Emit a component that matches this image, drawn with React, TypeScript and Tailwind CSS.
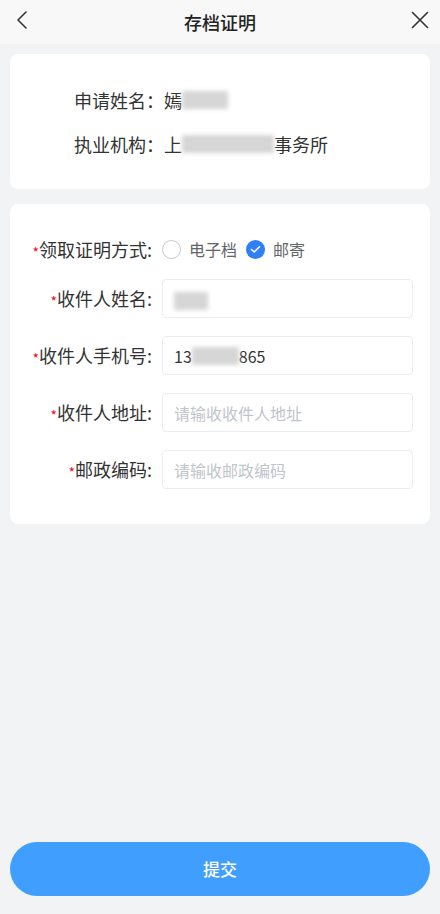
import React from "react";

const font = { fontFamily: '"Noto Sans CJK SC", "Noto Sans", sans-serif' };

function Blur({ w }: { w: number }) {
  return (
    <span
      className="inline-block h-[18px] bg-[#d6d6d6] blur-[2px] align-middle"
      style={{ width: w }}
    />
  );
}

function Label({ text }: { text: string }) {
  return (
    <div className="w-[142px] shrink-0 whitespace-nowrap text-right text-[18px] text-[#333]">
      <span className="relative top-[1px] text-[14px] text-[#ee0a24]">*</span>
      {text}
    </div>
  );
}

function Field({ label, placeholder, value }: { label: string; placeholder?: string; value?: React.ReactNode }) {
  return (
    <div className="flex items-center gap-[10px]">
      <Label text={label} />
      <div className="flex h-[39px] flex-1 items-center rounded-[4px] border border-[#ebedf0] px-[11px] text-[16px]">
        {value ? <span className="text-[#333]">{value}</span> : <span className="text-[#c0c4cc]">{placeholder}</span>}
      </div>
    </div>
  );
}

export default function App() {
  return (
    <div className="flex min-h-[914px] flex-col bg-[#f2f3f5]" style={font}>
      <div className="relative flex h-[44px] items-center justify-center bg-[#f8f8f8]">
        <svg className="absolute left-[14px] top-[10px]" width="16" height="20" viewBox="0 0 16 20" fill="none">
          <path d="M12 2 L4 10 L12 18" stroke="#333" strokeWidth="1.6" strokeLinecap="round" strokeLinejoin="round" />
        </svg>
        <span className="text-[18px] font-medium text-[#222]">存档证明</span>
        <svg className="absolute right-[11px] top-[11px]" width="18" height="18" viewBox="0 0 18 18" fill="none">
          <path d="M1.5 1.5 L16.5 16.5 M16.5 1.5 L1.5 16.5" stroke="#333" strokeWidth="1.6" strokeLinecap="round" />
        </svg>
      </div>

      <div className="mx-[10px] mt-[10px] flex flex-col gap-[20px] rounded-[8px] bg-white pb-[33px] pl-[64px] pt-[34px] text-[18px] text-[#333]">
        <div className="flex h-[24px] items-center">
          <span>申请姓名：</span>
          <span>嫣</span>
          <Blur w={46} />
        </div>
        <div className="flex h-[24px] items-center">
          <span>执业机构：</span>
          <span>上</span>
          <Blur w={92} />
          <span>事务所</span>
        </div>
      </div>

      <div className="mx-[10px] mt-[15px] flex flex-col rounded-[8px] bg-white pb-[35px] pr-[17px] pt-[30px]">
        <div className="flex h-[30px] items-center gap-[10px]">
          <Label text="领取证明方式:" />
          <div className="flex items-center text-[16px] text-[#646566]">
            <span className="h-[19px] w-[19px] rounded-full border border-[#c8c9cc]" />
            <span className="ml-[8px]">电子档</span>
            <span className="ml-[9px] flex h-[19px] w-[19px] items-center justify-center rounded-full bg-[#2f7ff5]">
              <svg width="11" height="9" viewBox="0 0 11 9" fill="none">
                <path d="M1.5 4.5 L4.2 7 L9.5 1.8" stroke="white" strokeWidth="1.6" strokeLinecap="round" strokeLinejoin="round" />
              </svg>
            </span>
            <span className="ml-[8px]">邮寄</span>
          </div>
        </div>
        <div className="mt-[15px] flex flex-col gap-[18px]">
          <Field label="收件人姓名:" value={<Blur w={34} />} />
          <Field
            label="收件人手机号:"
            value={
              <span className="flex items-center">
                13
                <Blur w={47} />
                865
              </span>
            }
          />
          <Field label="收件人地址:" placeholder="请输收收件人地址" />
          <Field label="邮政编码:" placeholder="请输收邮政编码" />
        </div>
      </div>

      <div className="flex-1" />

      <div className="px-[10px] pb-[18px]">
        <button className="h-[54px] w-full rounded-full bg-[#409eff] text-[17px] font-medium text-white">提交</button>
      </div>
    </div>
  );
}
